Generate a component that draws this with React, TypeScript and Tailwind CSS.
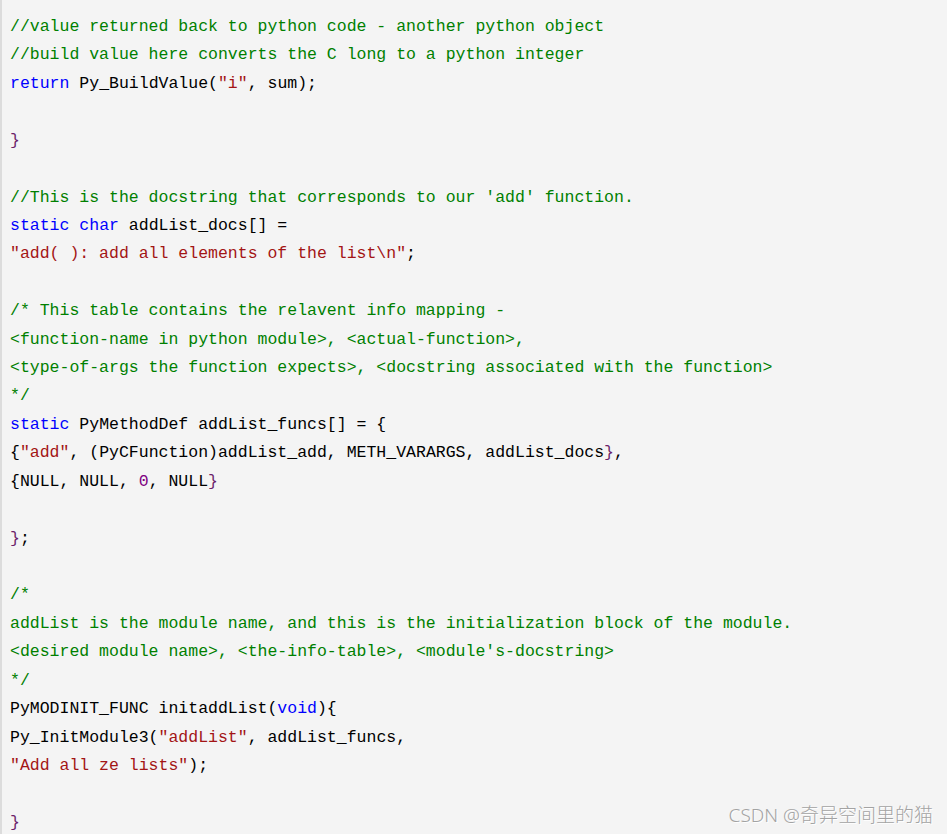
type Tok = [string, string?];

const C = "text-[#008000]";
const K = "text-[#0000ff]";
const S = "text-[#a31515]";
const N = "text-[#800080]";
const B = "text-[#6b1f6b]";

const LINES: Tok[][] = [
  [["//value returned back to python code - another python object", C]],
  [["//build value here converts the C long to a python integer", C]],
  [["return", K], [" Py_BuildValue("], ['"i"', S], [", sum);"]],
  [],
  [["}", B]],
  [],
  [["//This is the docstring that corresponds to our 'add' function.", C]],
  [["static", K], [" "], ["char", K], [" addList_docs[] ="]],
  [['"add( ): add all elements of the list\\n"', S], [";"]],
  [],
  [["/* This table contains the relavent info mapping -", C]],
  [["<function-name in python module>, <actual-function>,", C]],
  [["<type-of-args the function expects>, <docstring associated with the function>", C]],
  [["*/", C]],
  [["static", K], [" PyMethodDef addList_funcs[] = {"]],
  [["{"], ['"add"', S], [", (PyCFunction)addList_add, METH_VARARGS, addList_docs"], ["}", B], [","]],
  [["{NULL, NULL, "], ["0", N], [", NULL"], ["}", B]],
  [],
  [["}", B], [";"]],
  [],
  [["/*", C]],
  [["addList is the module name, and this is the initialization block of the module.", C]],
  [["<desired module name>, <the-info-table>, <module's-docstring>", C]],
  [["*/", C]],
  [["PyMODINIT_FUNC initaddList("], ["void", K], [")"], ["{"]],
  [["Py_InitModule3("], ['"addList"', S], [", addList_funcs,"]],
  [['"Add all ze lists"', S], [");"]],
  [],
  [["}", B]],
];

export default function App() {
  return (
    <main className="relative h-[834px] w-[947px] overflow-hidden bg-[#f4f4f4]">
      <div className="h-full border-l-2 border-[#dcdcdc] pl-2 pt-[13px] font-['Liberation_Mono','Courier_New',monospace] text-[16.5px] leading-[28.43px] text-black">
        {LINES.map((line, i) => (
          <div key={i} className="h-[28.43px] whitespace-pre">
            {line.map(([text, cls], j) => (
              <span key={j} className={cls}>
                {text}
              </span>
            ))}
          </div>
        ))}
      </div>
      <div className="absolute bottom-[5px] right-[14px] font-['Noto_Sans','Noto_Sans_CJK_SC',sans-serif] text-[19px] font-light text-[#a3a3a3] [text-shadow:1px_1px_0_#ffffff]">
        CSDN @奇异空间里的猫
      </div>
    </main>
  );
}
